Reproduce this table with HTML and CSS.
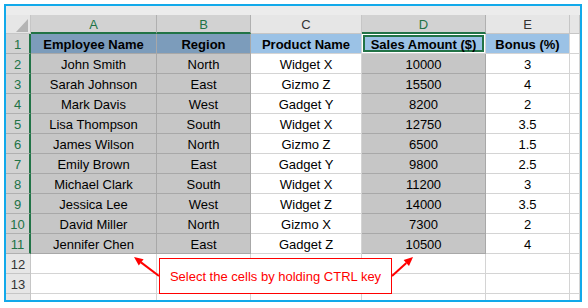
FILE: index.html
```html
<!DOCTYPE html>
<html>
<head>
<meta charset="utf-8">
<link rel="stylesheet" href="styles.css">
</head>
<body>
<div class="frame">
  <div class="sheet">
    <div class="strip"></div>
    <div class="corner"><span class="tri"></span></div>
    <div class="ch on">A</div><div class="ch on">B</div><div class="ch">C</div><div class="ch on">D</div><div class="ch">E</div><div class="ch"></div>

    <div class="rh on">1</div><div class="c hb s">Employee Name</div><div class="c hb s">Region</div><div class="c hb">Product Name</div><div class="c hb act">Sales Amount ($)</div><div class="c hb">Bonus (%)</div><div class="c"></div>
    <div class="rh on">2</div><div class="c s">John Smith</div><div class="c s">North</div><div class="c">Widget X</div><div class="c s">10000</div><div class="c">3</div><div class="c"></div>
    <div class="rh on">3</div><div class="c s">Sarah Johnson</div><div class="c s">East</div><div class="c">Gizmo Z</div><div class="c s">15500</div><div class="c">4</div><div class="c"></div>
    <div class="rh on">4</div><div class="c s">Mark Davis</div><div class="c s">West</div><div class="c">Gadget Y</div><div class="c s">8200</div><div class="c">2</div><div class="c"></div>
    <div class="rh on">5</div><div class="c s">Lisa Thompson</div><div class="c s">South</div><div class="c">Widget X</div><div class="c s">12750</div><div class="c">3.5</div><div class="c"></div>
    <div class="rh on">6</div><div class="c s">James Wilson</div><div class="c s">North</div><div class="c">Gizmo Z</div><div class="c s">6500</div><div class="c">1.5</div><div class="c"></div>
    <div class="rh on">7</div><div class="c s">Emily Brown</div><div class="c s">East</div><div class="c">Gadget Y</div><div class="c s">9800</div><div class="c">2.5</div><div class="c"></div>
    <div class="rh on">8</div><div class="c s">Michael Clark</div><div class="c s">South</div><div class="c">Widget X</div><div class="c s">11200</div><div class="c">3</div><div class="c"></div>
    <div class="rh on">9</div><div class="c s">Jessica Lee</div><div class="c s">West</div><div class="c">Widget Z</div><div class="c s">14000</div><div class="c">3.5</div><div class="c"></div>
    <div class="rh on">10</div><div class="c s">David Miller</div><div class="c s">North</div><div class="c">Gizmo X</div><div class="c s">7300</div><div class="c">2</div><div class="c"></div>
    <div class="rh on">11</div><div class="c s">Jennifer Chen</div><div class="c s">East</div><div class="c">Gadget Z</div><div class="c s">10500</div><div class="c">4</div><div class="c"></div>
    <div class="rh">12</div><div class="c"></div><div class="c"></div><div class="c"></div><div class="c"></div><div class="c"></div><div class="c"></div>
    <div class="rh">13</div><div class="c"></div><div class="c"></div><div class="c"></div><div class="c"></div><div class="c"></div><div class="c"></div>
    <div class="rh last"></div><div class="c last"></div><div class="c last"></div><div class="c last"></div><div class="c last"></div><div class="c last"></div><div class="c last"></div>
  </div>

  <svg class="arrows" width="574" height="294" viewBox="0 0 574 294">
    <line x1="153" y1="270" x2="135" y2="256.4" stroke="#ff0000" stroke-width="2"/>
    <polygon points="128,251 137.6,253.3 132.8,259.6" fill="#ff0000"/>
    <line x1="386" y1="270" x2="400.3" y2="257" stroke="#ff0000" stroke-width="2"/>
    <polygon points="407,251 403,260 397.6,254.1" fill="#ff0000"/>
  </svg>
  <div class="callout">Select the cells by holding CTRL key</div>
</div>
</body>
</html>
```

FILE: styles.css
```css
* { box-sizing: border-box; }

body {
  margin: 0;
  background: #ffffff;
  font-family: "Liberation Sans", Arial, sans-serif;
}

.frame {
  position: relative;
  margin: 4px;
  width: 578px;
  height: 298px;
  border: 2px solid #12a9ea;
  overflow: hidden;
  background: #ffffff;
}

.sheet {
  display: grid;
  grid-template-columns: 25px 126px 94px 111px 124px 84px 1fr;
  grid-template-rows: 9px 19px repeat(13, 20px) 1fr;
  height: 100%;
}

.strip {
  grid-column: 1 / -1;
  background: #ececec;
}

.corner {
  background: #e6e6e6;
  border-right: 1px solid #c6c6c6;
  border-bottom: 1px solid #c6c6c6;
  display: flex;
  justify-content: flex-end;
  align-items: flex-end;
  padding: 0 2px 1px 0;
}

.tri {
  width: 0;
  height: 0;
  border-left: 12px solid transparent;
  border-bottom: 13px solid #b4b4b4;
}

.ch, .rh {
  background: #e6e6e6;
  border-right: 1px solid #c6c6c6;
  border-bottom: 1px solid #c6c6c6;
  color: #333333;
  font-size: 13px;
  display: flex;
  align-items: center;
  justify-content: center;
  padding-top: 1px;
}

.ch.on {
  background: #d2d2d2;
  color: #217346;
  border-bottom: 2px solid #217346;
  border-right-color: #b0b0b0;
}

.rh.on {
  background: #d2d2d2;
  color: #217346;
  border-right: 2px solid #217346;
  border-bottom-color: #b0b0b0;
}

.c {
  border-right: 1px solid #d4d4d4;
  border-bottom: 1px solid #d4d4d4;
  display: flex;
  align-items: center;
  justify-content: center;
  font-size: 13px;
  color: #000000;
  white-space: nowrap;
  overflow: hidden;
  padding-top: 1px;
}

.c.s {
  background: #c6c6c6;
  border-color: #a8a8a8;
}

.c.hb {
  background: #9bc2e6;
  font-weight: bold;
}

.c.hb.s {
  background: #7c9cbb;
}

.c.act {
  box-shadow: inset 0 0 0 1px #ffffff, inset 0 0 0 3px #217346;
}

.last {
  border-bottom: none;
}

.arrows {
  position: absolute;
  left: 0;
  top: 0;
}

.callout {
  position: absolute;
  left: 153px;
  top: 252px;
  width: 233px;
  height: 36px;
  border: 1px solid #ff0000;
  background: #ffffff;
  color: #ff0000;
  font-size: 13px;
  display: flex;
  align-items: center;
  justify-content: center;
  white-space: nowrap;
}
```
